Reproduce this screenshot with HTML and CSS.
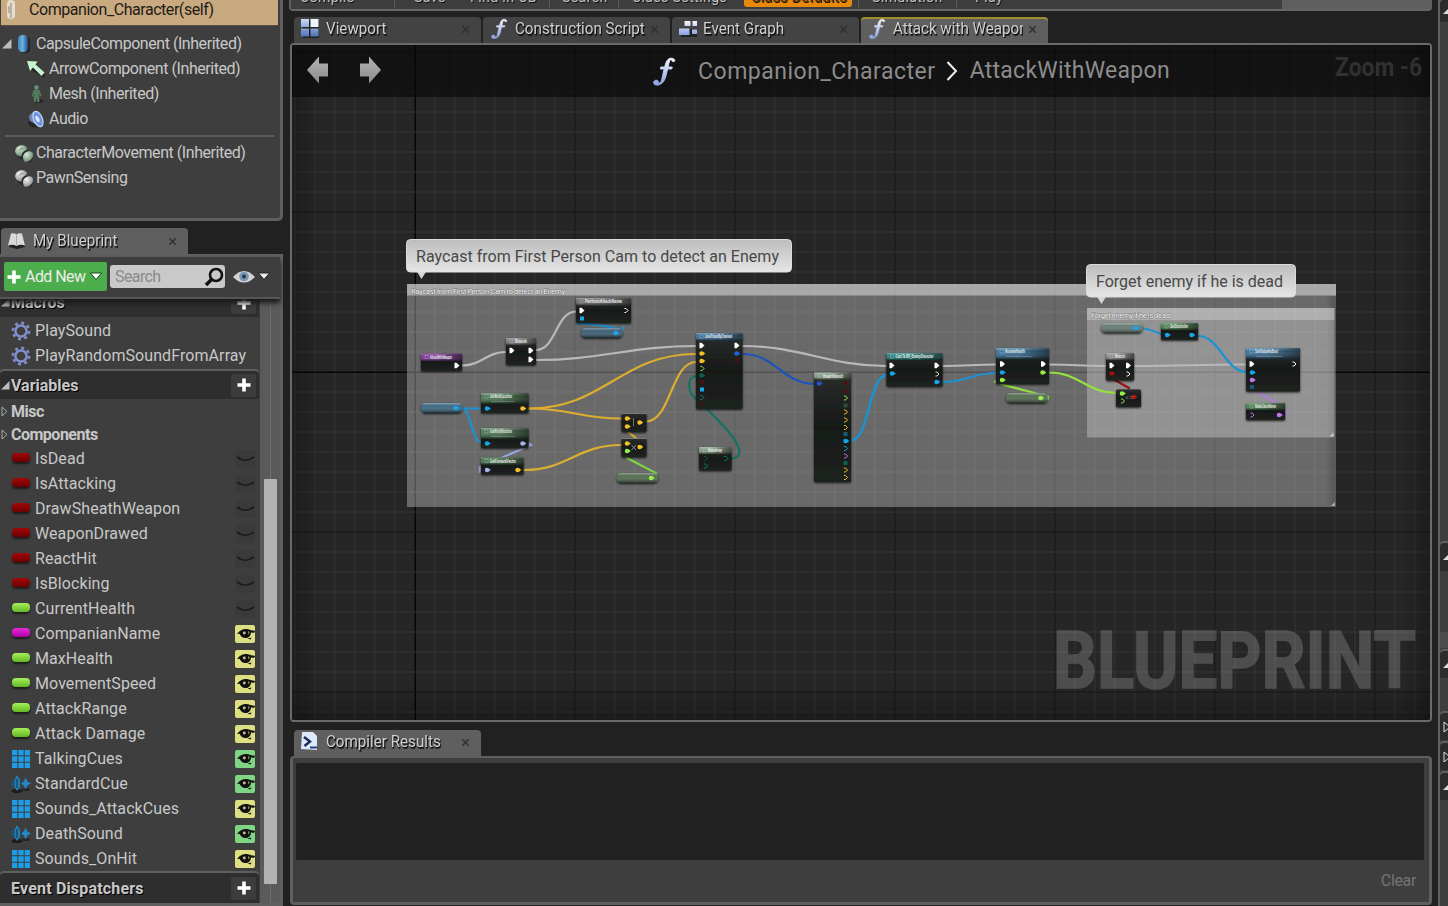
FILE: index.html
```html
<!DOCTYPE html>
<html lang="en">
<head>
<meta charset="utf-8">
<title>Companion_Character</title>
<link rel="stylesheet" href="styles.css">
</head>
<body>
<svg class="defs" width="0" height="0">
  <defs>
    <linearGradient id="ice" x1="0" y1="0" x2="0" y2="1"><stop offset="0" stop-color="#f4f8ff"/><stop offset="1" stop-color="#8a9fe0"/></linearGradient>
    <linearGradient id="iceB" x1="0" y1="0" x2="0" y2="1"><stop offset="0" stop-color="#c8dcf4"/><stop offset="1" stop-color="#4d72b8"/></linearGradient>
    <radialGradient id="ballG" cx=".35" cy=".3" r=".8"><stop offset="0" stop-color="#d6ead9"/><stop offset="1" stop-color="#5e7d63"/></radialGradient>
    <radialGradient id="ballW" cx=".35" cy=".3" r=".8"><stop offset="0" stop-color="#f4f4f4"/><stop offset="1" stop-color="#7d7d7d"/></radialGradient>
    <linearGradient id="caps" x1="0" x2="1"><stop offset="0" stop-color="#3d86c0"/><stop offset=".45" stop-color="#6cb2e2"/><stop offset="1" stop-color="#1d4f7d"/></linearGradient>
    <linearGradient id="grey" x1="0" y1="0" x2="0" y2="1"><stop offset="0" stop-color="#b4b4b4"/><stop offset="1" stop-color="#8a8a8a"/></linearGradient>
    <symbol id="fn" viewBox="0 0 18 22"><path d="M17 2.600C15.600.900 12.900.900 11.300 3.200 10.300 4.700 9.900 6.500 9.500 8H6.600L6.300 9.500H9.100L7.300 17.200C6.900 19.100 6.300 20.100 5.300 20 4.600 19.900 5.200 18.200 3.600 17.900 2.200 17.700 1 18.700 1.200 20 1.500 21.700 4 22 6 21.100 8.900 19.800 9.800 17.300 10.500 14.600L11.700 9.500H14.800L15.200 8H12.100C12.500 6 12.900 3.500 13.800 2.500 14.500 1.900 14.700 3.900 15.900 4 17 4 17.400 3.300 17 2.600Z" fill="url(#ice)" stroke="url(#ice)" stroke-width=".7"/></symbol>
    <symbol id="balls" viewBox="0 0 20 20"><path d="M3 13Q8 19 17 19.500L19 15 12 7Z" fill="#222" opacity=".7"/><path d="M1 8.500A6.800 6.800 0 0 1 13 4.500Q13.500 6.500 10.500 8T7.500 13.500A6.800 6.800 0 0 1 1 8.500Z" fill="var(--ball)"/><path d="M9 15A6 6 0 0 1 18.500 9.500Q20 13 17.500 16T11.500 19Q9 18 9 15Z" fill="var(--ball)"/><path d="M5 7.500Q7 5 9 5.500" stroke="#555" fill="none" opacity=".7"/></symbol>
    <symbol id="gear" viewBox="0 0 20 20"><circle cx="10" cy="10" r="5.600" fill="none" stroke="#8190cd" stroke-width="2.500"/><circle cx="10" cy="10" r="8.100" fill="none" stroke="#8190cd" stroke-width="2.600" stroke-dasharray="2.900 3.462"/></symbol>
    <symbol id="eye" viewBox="0 0 20 18"><path d="M2 9C5 4.800 9 3.300 13 4.200 15.800 4.700 17.500 6 20 5.700L19.500 7.600C18 8 17.200 7.800 16 7.200 16 10.500 14 12.800 11 13 7.500 13.200 5.500 11 4.500 8.700Z" fill="#111"/><circle cx="9.300" cy="8" r="1.400" fill="#c9c98a"/><path d="M13.300 9.500Q14.500 8.500 14.600 7L13 6Z" fill="#c9c98a" opacity=".7"/><path d="M12.500 13.600L16.500 12.600 15.500 14.400Z" fill="#111"/></symbol>
    <symbol id="lid" viewBox="0 0 20 18"><path d="M2 7Q10 13.500 19 7" fill="none" stroke="#1b1b1b" stroke-width="1.700"/></symbol>
    <symbol id="grid9" viewBox="0 0 18 18"><path d="M0 0h5.300v5.300H0zM6.350 0h5.300v5.300h-5.300zM12.700 0H18v5.300h-5.300zM0 6.350h5.300v5.300H0zM6.350 6.350h5.300v5.300h-5.300zM12.700 6.350H18v5.300h-5.300zM0 12.700h5.300V18H0zM6.350 12.700h5.300V18h-5.300zM12.700 12.700H18V18h-5.300z" fill="#1c9de6"/></symbol>
    <symbol id="cue" viewBox="0 0 20 20"><ellipse cx="6" cy="17" rx="5.500" ry="2" fill="#1c1c1c"/><ellipse cx="15" cy="15.500" rx="4" ry="1.500" fill="#252525"/><path d="M6 1L9 5.500 9 13 6 17 3.500 13 3.500 5.500Z" fill="#1f7eb4"/><path d="M2.500 5V14L.500 12V7Z" fill="#195a80"/><path d="M6 5V14" stroke="#123e59" stroke-width="1.200"/><path d="M14.500 3.500L16.500 7.500 20 9.500 16.500 11.500 14.500 15.500 12.800 11.500 10 9.500 12.800 7.500Z" fill="#2486c4"/></symbol>
    <symbol id="plus" viewBox="0 0 14 14"><path d="M7 0.500V13.500M.500 7H13.500" stroke="#fff" stroke-width="3.600"/></symbol>
  </defs>
</svg>

<div class="app">
  <aside class="side">
    <section class="components">
      <div class="self"><svg width="10" height="20" viewBox="0 0 10 20"><rect x="1" y="0" width="8" height="19" rx="4" fill="#e3dccf"/><path d="M5 3v15M3 6v7" stroke="#8d857a" stroke-width="1"/></svg><span>Companion_Character(self)</span></div>
      <div class="crow r1"><svg class="tri" width="10" height="10"><path d="M0 9.500H9.500V0Z" fill="#bdbdbd"/></svg><svg width="12" height="18"><rect x="2" y="2" width="10" height="16" rx="4" fill="#262626"/><rect width="10" height="17" rx="4.500" fill="url(#caps)"/></svg><span>CapsuleComponent (Inherited)</span></div>
      <div class="crow r2"><svg width="19" height="18"><path d="M3 9L17 18 18 15 8 4Z" fill="#222"/><path d="M0 1L10.500 1.500 8.500 4.500 17.500 12.500 14.500 16 6 7.500 3 11Z" fill="#c8f3d0"/></svg><span>ArrowComponent (Inherited)</span></div>
      <div class="crow r2"><svg width="19" height="18"><ellipse cx="11" cy="16" rx="6" ry="1.800" fill="#242424"/><circle cx="9.500" cy="2.500" r="2.200" fill="#6e9277"/><path d="M6.500 5H12.500L14.500 11 13 11.500 12 8 12.500 17H10L9.500 12 9 17H6.500L7 8 6 11.500 4.500 11Z" fill="#537a5c"/></svg><span>Mesh (Inherited)</span></div>
      <div class="crow r2"><svg width="19" height="18"><ellipse cx="9" cy="13" rx="8" ry="4.500" fill="#262626"/><path d="M2 6L7 1 14 14 8 14 3 11Z" fill="#7089ba"/><ellipse cx="11" cy="9" rx="4.300" ry="8" transform="rotate(-24 11 9)" fill="#6d94dd" stroke="#bfd1f6" stroke-width="1.300"/><ellipse cx="10.500" cy="9" rx="1.700" ry="3.500" transform="rotate(-24 10.500 9)" fill="#dce7ff"/></svg><span>Audio</span></div>
      <hr>
      <div class="crow r3 green"><svg width="20" height="20"><use href="#balls"/></svg><span>CharacterMovement (Inherited)</span></div>
      <div class="crow r3 white"><svg width="20" height="20"><use href="#balls"/></svg><span>PawnSensing</span></div>
    </section>

    <div class="tab active bptab"><svg width="18" height="18"><path d="M1 15L4 2 9 4 14 2 17 15 9 17Z" fill="#222"/><path d="M0 13.500L3 1.500Q6 .500 8.500 2.500 11 .500 14 1.500L17 13.500Q12 12 8.500 14 5 12 0 13.500Z" fill="#d9d9d9"/><path d="M8.500 3V13" stroke="#aaa" fill="none"/></svg><span class="t">My Blueprint</span><i>×</i></div>
    <section class="blueprint">
      <div class="bar">
        <div class="add"><svg width="14" height="14"><use href="#plus"/></svg><span>Add New</span><svg width="12" height="9"><path d="M.500 1H11.500L6 7.500Z" fill="#fff" stroke="#1d4a1d"/></svg></div>
        <div class="search"><span>Search</span><svg width="20" height="20"><circle cx="12" cy="8" r="6" fill="none" stroke="#111" stroke-width="2.600"/><path d="M7.500 12.500L2 18" stroke="#111" stroke-width="3.600"/></svg></div>
        <svg class="view" width="22" height="14"><path d="M0 7Q11-5 22 7 11 18 0 7Z" fill="#d4d4d4"/><circle cx="11" cy="6.500" r="4.800" fill="#7896b6"/><circle cx="11" cy="6.500" r="2" fill="#26374c"/></svg>
        <svg class="vcar" width="12" height="9"><path d="M.500 1H11.500L6 7.500Z" fill="#eee" stroke="#222"/></svg>
      </div>
      <div class="listwrap">
        <div class="list">
          <div class="head macros"><svg class="ht" width="9" height="9"><path d="M0 8.500H8.500V0Z" fill="#bbb"/></svg><b>Macros</b><em><svg width="14" height="14"><use href="#plus"/></svg></em></div>
          <div class="row"><svg width="20" height="20"><use href="#gear"/></svg><span>PlaySound</span></div>
          <div class="row"><svg width="20" height="20"><use href="#gear"/></svg><span>PlayRandomSoundFromArray</span></div>
          <div class="head vars"><svg class="ht" width="9" height="9"><path d="M0 8.500H8.500V0Z" fill="#bbb"/></svg><b>Variables</b><em><svg width="14" height="14"><use href="#plus"/></svg></em></div>
          <div class="cat"><svg width="7" height="11"><path d="M1 1L6 5.500 1 10Z" fill="none" stroke="#aaa"/></svg><b>Misc</b></div>
          <div class="cat"><svg width="7" height="11"><path d="M1 1L6 5.500 1 10Z" fill="none" stroke="#aaa"/></svg><b>Components</b></div>
          <div id="variables"></div>
          <div class="head events"><b>Event Dispatchers</b><em><svg width="14" height="14"><use href="#plus"/></svg></em></div>
        </div>
        <div class="scroll"><div class="thumb"></div></div>
      </div>
    </section>
  </aside>

  <main class="main">
    <div class="toolbar">
      <div class="tools"><span class="k1">Compile</span><span class="k2">Save</span><span class="k3">Find in CB</span><span class="k4">Search</span><span class="k5">Class Settings</span><span class="k6">Class Defaults</span><span class="k7">Simulation</span><span class="k8">Play</span></div>
    </div>
    <div class="tabs">
      <div class="tab"><svg width="18" height="19"><path d="M2 2H18V19H2Z" fill="#222"/><path d="M0 0H8V8H0ZM0 9.500H8V17.500H0ZM9.500 9.500H17.500V17.500H9.500Z" fill="url(#iceB)"/><path d="M9.500 0H17.500V8H9.500Z" fill="#eef5fc"/></svg><span class="t">Viewport</span><i>×</i></div>
      <div class="tab"><svg width="17" height="21"><use href="#fn"/></svg><span class="t">Construction Script</span><i>×</i></div>
      <div class="tab"><svg width="21" height="18"><path d="M2 9H21V17H2Z" fill="#222"/><path d="M5.500 1H11.500V6H5.500ZM13.500 1H19.500V6H13.500ZM0 8.500H10.500V15H0ZM13 9.500H19V14H13Z" fill="url(#ice)"/></svg><span class="t">Event Graph</span><i>×</i></div>
      <div class="tab active hot"><svg width="17" height="21"><use href="#fn"/></svg><span class="t cut">Attack with Weapon</span><i>×</i></div>
    </div>
    <section class="graph">
      <svg id="canvas" width="1138" height="676" viewBox="292 45 1138 676"></svg>
      <div class="crumbs">
        <svg width="76" height="30"><path d="M0 14L12 .500V7.500H21V20.500H12V27.500ZM74 14L62 .500V7.500H53V20.500H62V27.500Z" fill="url(#grey)"/></svg>
        <svg class="bigf" width="24" height="30"><use href="#fn"/></svg>
        <span class="c1">Companion_Character</span>
        <svg width="12" height="20"><path d="M1.500 1L10 10 1.500 19" fill="none" stroke="#f0f0f0" stroke-width="2"/></svg>
        <span class="c2">AttackWithWeapon</span>
      </div>
    </section>
    <div class="tabs low">
      <div class="tab active"><svg width="17" height="19"><path d="M1 0H12L16 4V18L0 17Z" fill="#dce8fb"/><path d="M3 5L9 9.500 3.500 14" fill="none" stroke="#1c2b55" stroke-width="2.400"/><path d="M9 15.500H16" stroke="#27407c" stroke-width="2"/></svg><span class="t">Compiler Results</span><i>×</i></div>
    </div>
    <section class="compiler">
      <div class="log"></div>
      <div class="clear"><span>Clear</span></div>
    </section>
  </main>

  <aside class="details">
    <div class="dh d1"><svg width="5" height="6"><path d="M0 6L5 1V6Z" fill="#ddd"/></svg></div>
    <div class="dh d2"><svg width="5" height="6"><path d="M0 6L5 1V6Z" fill="#ddd"/></svg></div>
    <div class="dg"></div>
    <div class="dh d3"><svg width="5" height="6"><path d="M0 6L5 1V6Z" fill="#ddd"/></svg></div>
    <div class="dh d4"><svg width="5" height="12"><path d="M1 1V11L7 6Z" fill="none" stroke="#ddd"/></svg></div>
    <div class="dh d5"><svg width="5" height="12"><path d="M1 1V11L7 6Z" fill="none" stroke="#ddd"/></svg></div>
    <div class="dh d6"><svg width="5" height="6"><path d="M0 6L5 1V6Z" fill="#ddd"/></svg></div>
  </aside>
</div>
<script src="app.js"></script>
</body>
</html>
```
FILE: styles.css
```css
* { box-sizing: border-box; }
body { margin: 0; background: #212121; font-family: Roboto, "Liberation Sans", sans-serif; font-size: 16px; color: #c8c8c8; overflow: hidden; }
svg { flex: none; display: block; }
.defs { position: absolute; }
.app { display: flex; height: 906px; width: 1448px; overflow: hidden; }

.side { width: 283px; display: flex; flex-direction: column; flex: none; }
.components { height: 221px; width: 283px; background: #3e3e3e; border: solid #5f5f5f; border-width: 0 3px 3px 0; border-radius: 0 0 5px 0; letter-spacing: -.45px; flex: none; }
.self { height: 26px; width: 277px; margin-left: 1px; background: #c9a97f; border-bottom: 1px solid #5c5040; color: #1e1b17; display: flex; align-items: flex-start; padding-left: 5px; }
.self span { margin-left: 13px; line-height: 20px; }
.crow { height: 25px; display: flex; align-items: center; }
.r1 { margin-top: 5px; padding-left: 2px; }
.r1 svg { margin-right: 6px; }
.r2 { padding-left: 27px; }
.r2 svg { margin-right: 3px; }
.r3 { padding-left: 14px; }
.r3 svg { margin-right: 2px; }
.green { --ball: url(#ballG); }
.white { --ball: url(#ballW); }
.components hr { border: 0; height: 2px; background: #5d5d5d; margin: 4px 6px 3px 5px; }

.tab { display: flex; align-items: center; width: 187px; height: 26px; background: #434343; border-radius: 4px 4px 0 0; padding: 0 0 1px 7px; position: relative; }
.tab .t { transform: scaleX(.948); transform-origin: 0 50%; margin-left: 7px; white-space: nowrap; color: #d0d0d0; text-shadow: 1px 1px 0 #111, 1px 2px 1px #1a1a1a; }
.tab svg { width: 18px; }
.tab i { position: absolute; right: 11px; top: 2px; font-style: normal; font-size: 17px; line-height: 22px; color: #303030; }
.tab.active { background: #5f5f5f; }
.bptab { margin: 7px 0 0 1px; flex: none; }
.blueprint { flex: 1; background: #3e3e3e; border: solid #5f5f5f; border-width: 3px 3px 3px 0; display: flex; flex-direction: column; min-height: 0; }
.bar { height: 42px; width: 280px; display: flex; align-items: center; flex: none; border-bottom: 2px solid #555; box-shadow: 0 4px 5px #1a1a1a; position: relative; padding: 0 0 1px 4px; }
.add { width: 103px; height: 29px; background: #4bad4b; border-radius: 2px; display: flex; align-items: center; color: #eee; padding-left: 3px; }
.add span { letter-spacing: -.55px; margin: 0 4px 0 4px; }
.search { margin-left: 3px; width: 115px; height: 23px; background: #c9c9c9; border-radius: 3px; display: flex; align-items: center; justify-content: space-between; padding: 0 1px 0 5px; color: #8b8b8b; }
.search span { letter-spacing: -.6px; }
.view { margin-left: 8px; }
.vcar { margin-left: 3px; }
.listwrap { flex: 1; display: flex; min-height: 0; overflow: hidden; }
.list { width: 260px; flex: none; }
.head { height: 28px; background: #2e2e2e; border-radius: 4px 4px 0 0; display: flex; align-items: center; padding-left: 1px; width: 259px; text-shadow: 1px 1px 0 #000; }
.head b { flex: 1; margin-left: 1px; }
.head em { width: 25px; height: 23px; background: #3c3c3c; border-radius: 2px; display: flex; align-items: center; justify-content: center; margin-right: 3px; }
.head em svg { height: 14px; }
.macros { height: 29px; margin-top: -11px; margin-bottom: 1px; }
.row { height: 25px; display: flex; align-items: center; padding-left: 11px; letter-spacing: .08px; }
.row svg { margin-right: 4px; }
.row .vis { margin: 0 5px 0 auto; width: 20px; height: 18px; border-radius: 2px; background: #3a3a3a; }
.row .vis.y { background: #dede83; }
.row .vis.g { background: #7fd584; }
.pill { width: 18px; height: 9px; border-radius: 4px; margin: 0 5px 2px 1px; box-shadow: 0 2px 2px #1c1c1c; }
.bool { background: linear-gradient(#a00808, #6e0000); }
.float { background: linear-gradient(#a6f05a, #62b823); }
.name { background: linear-gradient(#e62bd8, #b000a6); }
.row .sq { margin: 0 5px 0 1px; }
.vars { margin-top: 3px; box-shadow: 0 -2px 0 #5f5f5f; margin-bottom: 1px; }
.cat { height: 23px; display: flex; align-items: center; padding-left: 1px; }
.cat b { margin-left: 3px; letter-spacing: -.5px; }
.events { margin-top: 2px; box-shadow: 0 -2px 0 #5f5f5f; padding-left: 10px; height: 30px; letter-spacing: .18px; }
.scroll { width: 20px; background: linear-gradient(90deg, #5a5a5a 0 10px, #6c6c6c 10px 11px, #5a5a5a 11px); padding: 180px 0 0 4px; }
.thumb { width: 13px; height: 405px; background: #b3b3b3; border-radius: 1px; }

.main { margin-left: 6px; width: 1143px; display: flex; flex-direction: column; flex: none; }
.toolbar { height: 11px; background: #5f5f5f; border-bottom: 2px solid #666; border-radius: 0 0 4px 4px; padding-left: 2px; overflow: hidden; }
.tools { width: 991px; height: 9px; background: #3e3e3e; display: flex; overflow: hidden; }
.tools span { margin-top: -11px; height: 19px; line-height: 16px; font-size: 14px; letter-spacing: .42px; white-space: nowrap; color: #c0c0c0; border-right: 1px solid #5a5a5a; text-shadow: 1px 1px 0 #111; flex: none; }
.tools .k1 { width: 104px; padding-left: 9px; }
.tools .k2 { width: 65px; padding-left: 19px; border-right: 0; }
.tools .k3 { width: 90px; padding-left: 10px; }
.tools .k4 { width: 69px; padding-left: 12px; }
.tools .k5 { width: 125px; padding-left: 13px; border-right: 0; }
.tools .k6 { width: 108px; padding-left: 7px; border-right: 0; background: #e8890c; color: #50340a; border-radius: 3px; height: 18px; }
.tools .k7 { width: 99px; margin-left: 6px; padding-left: 13px; border-left: 1px solid #5a5a5a; }
.tools .k8 { width: 60px; padding-left: 18px; border-right: 0; }
.tabs { display: flex; gap: 2px; height: 32px; padding: 6px 0 0 5px; }
.tabs.low { height: 34px; padding-top: 8px; flex: none; }
.tabs .tab { height: 27px; padding-bottom: 4px; }
.tabs .tab i { top: 1px; }
.tab.hot { box-shadow: inset 0 2px 0 #a08d2c; }
.tab .cut { width: 137px; overflow: hidden; margin-left: 7px; }
.tabs .tab:nth-child(2) .t { margin-left: 7px; }
.tabs .tab:nth-child(3) .t { margin-left: 6px; }
.graph { height: 679px; margin-left: 1px; width: 1142px; border: 2px solid #6a6a6a; border-radius: 4px; position: relative; flex: none; overflow: hidden; }
.crumbs { position: absolute; inset: 0 0 auto 0; height: 52px; background: rgba(8, 8, 8, .66); display: flex; align-items: center; padding-left: 15px; font-size: 23px; color: #8c8c8c; }
.bigf { margin: 0 22px 0 269px; }
.c1 { letter-spacing: .52px; margin-right: 10px; }
.c2 { letter-spacing: .28px; margin: -1px 0 0 12px; }
.compiler { flex: 1; margin: 0 0 1px 1px; width: 1142px; border: 3px solid #5f5f5f; border-top-width: 2px; border-radius: 4px; background: #3e3e3e; padding: 5px 5px 0 3px; }
.log { background: #212121; height: 97px; border-radius: 2px; }
.clear { display: flex; justify-content: flex-end; padding: 11px 8px 0 0; color: #757575; letter-spacing: -.35px; }

.details { margin-left: 6px; width: 10px; flex: none; background: #3e3e3e; border-left: 2px solid #5f5f5f; }
.dh { background: #2c2c2c; border-radius: 4px 0 0 0; display: flex; align-items: center; justify-content: flex-end; box-shadow: 0 -2px 0 #5f5f5f; }
.d1 { height: 22px; }
.d2 { height: 28px; margin-top: 521px; }
.dg { height: 16px; margin-top: 61px; background: #4b4b4b; }
.d3 { height: 27px; margin-top: 3px; }
.d4 { height: 27px; margin-top: 35px; }
.d5 { height: 27px; margin-top: 3px; }
.d6 { height: 27px; margin-top: 3px; }
```
FILE: app.js
```js
const eye = kind => `<svg class="vis ${kind}" viewBox="0 0 20 18"><use href="#${kind ? 'eye' : 'lid'}"/></svg>`;
const pill = kind => `<div class="pill ${kind}"></div>`;
const sheet = '<svg class="sq" width="18" height="18"><use href="#grid9"/></svg>';
const cue = '<svg width="20" height="20"><use href="#cue"/></svg>';

document.getElementById('variables').innerHTML = [
  ['IsDead', pill('bool'), ''], ['IsAttacking', pill('bool'), ''], ['DrawSheathWeapon', pill('bool'), ''],
  ['WeaponDrawed', pill('bool'), ''], ['ReactHit', pill('bool'), ''], ['IsBlocking', pill('bool'), ''],
  ['CurrentHealth', pill('float'), ''], ['CompanianName', pill('name'), 'y'], ['MaxHealth', pill('float'), 'y'],
  ['MovementSpeed', pill('float'), 'y'], ['AttackRange', pill('float'), 'y'], ['Attack Damage', pill('float'), 'y'],
  ['TalkingCues', sheet, 'g'], ['StandardCue', cue, 'g'], ['Sounds_AttackCues', sheet, 'y'],
  ['DeathSound', cue, 'g'], ['Sounds_OnHit', sheet, 'y']
].map(([name, icon, vis]) => `<div class="row">${icon}<span>${name}</span>${eye(vis)}</div>`).join('');

const W = '#fff', B = '#18a5ea', Y = '#f2c028', G = '#98f04a', L = '#a9b4f2', T = '#128068', P = '#c07af0', D = '#1c63d8';
let out = '';
const add = s => { out += s; };

add(`<defs>
<linearGradient id="body" x1="0" y1="0" x2="0" y2="1"><stop offset="0" stop-color="#2a2d2b"/><stop offset=".5" stop-color="#171918"/><stop offset="1" stop-color="#1f2220"/></linearGradient>
<linearGradient id="bub" x1="0" y1="0" x2="0" y2="1"><stop offset="0" stop-color="#bcbcbc"/><stop offset="1" stop-color="#e6e6e6"/></linearGradient>
<linearGradient id="sheen" x1="0" y1="0" x2="0" y2="1"><stop offset="0" stop-color="#fff" stop-opacity=".4"/><stop offset=".3" stop-color="#fff" stop-opacity=".05"/><stop offset="1" stop-color="#000" stop-opacity=".55"/></linearGradient>
<linearGradient id="fade" x1="0" x2="1"><stop offset="0" stop-color="#111" stop-opacity="0"/><stop offset="1" stop-color="#111" stop-opacity=".6"/></linearGradient>
<linearGradient id="edgeL" x1="0" x2="1"><stop offset="0" stop-opacity=".25"/><stop offset="1" stop-opacity="0"/></linearGradient>
<linearGradient id="edgeB" x1="0" y1="1" x2="0" y2="0"><stop offset="0" stop-opacity=".3"/><stop offset="1" stop-opacity="0"/></linearGradient>
<filter id="sh" x="-20%" y="-20%" width="140%" height="150%"><feDropShadow dx="0" dy="1" stdDeviation="1.300" flood-opacity=".8"/></filter></defs>
<rect x="292" y="45" width="1138" height="676" fill="#262626"/>`);

for (let x = 295; x < 1430; x += 20) {
  const major = (x - 415) % 160 === 0;
  add(`<rect x="${x - .5}" y="45" width="${x === 415 ? 1.5 : 1}" height="676" fill="${x === 415 ? '#050505' : major ? '#161616' : '#353535'}"/>`);
}
for (let y = 52; y < 721; y += 20) {
  const major = (y - 372) % 160 === 0;
  add(`<rect x="292" y="${y - .5}" width="1138" height="${y === 372 ? 1.5 : 1}" fill="${y === 372 ? '#050505' : major ? '#161616' : '#353535'}"/>`);
}
add(`<rect x="292" y="45" width="30" height="676" fill="url(#edgeL)"/>
<rect x="292" y="686" width="1138" height="35" fill="url(#edgeB)"/>
<rect x="-1430" y="-721" width="30" height="676" fill="url(#edgeL)" transform="rotate(180)"/>
<text x="1053" y="688" font-size="79.500" font-weight="bold" fill="#fff" stroke="#fff" stroke-width="1.600" opacity=".18" textLength="363" lengthAdjust="spacingAndGlyphs">BLUEPRINT</text>`);

const comment = (x, y, w, h, band, alpha, bandAlpha, text, tw) => add(`<rect x="${x}" y="${y}" width="${w}" height="${h}" fill="#fff" fill-opacity="${alpha}"/>
<rect x="${x}" y="${y}" width="${w}" height="${band}" fill="#ddd" fill-opacity="${bandAlpha}"/>
<text x="${x + 4}" y="${y + 9.500}" font-size="8" fill="#f2f2f2" stroke="#333" stroke-width="1" stroke-opacity=".45" paint-order="stroke" textLength="${tw}">${text}</text>
<path d="M${x + w - 1} ${y + h - 5}V${y + h - 1}H${x + w - 5}Z" fill="#ccc"/>`);
comment(407, 284, 929, 223, 11.500, .31, .55, 'Raycast from First Person Cam to detect an Enemy', 154);
add('<rect x="1326" y="296" width="10" height="211" fill="url(#fade)" opacity=".4"/>');
comment(1087, 308, 247.500, 129.500, 12, .28, .4, 'Forget enemy if he is dead', 79);

const bubble = (x, y, w, h, text, tw) => add(`<path d="M${x + 10} ${y + h - 1}h10l-5 8z" fill="#d6d6d6"/>
<rect x="${x}" y="${y}" width="${w}" height="${h}" rx="4" fill="url(#bub)" stroke="#dcdcdc"/>
<text x="${x + 9.500}" y="${y + 22.500}" font-size="16" fill="#484848" textLength="${tw}">${text}</text>`);
bubble(406.500, 239.500, 385, 32.500, 'Raycast from First Person Cam to detect an Enemy', 363);
bubble(1086.500, 264.500, 209, 32.500, 'Forget enemy if he is dead', 187);

const wire = (c, d, w = 2.200) => add(`<path d="${d}" fill="none" stroke="${c}" stroke-width="${w}" stroke-linecap="round"/>`);
const link = (c, x1, y1, x2, y2, k = .45, w) => {
  const dx = (x2 - x1) * k;
  wire(c, `M${x1} ${y1}C${x1 + dx} ${y1} ${x2 - dx} ${y2} ${x2} ${y2}`, w);
};
const WH = '#b9b9b9';
link(WH, 462, 365.500, 506, 352);
link(WH, 536, 350, 576, 311.500, .5);
link(WH, 536, 360, 696, 346, .4);
link(WH, 743, 346, 886, 366, .4);
link(WH, 943, 366, 996, 364.500);
link(WH, 1049, 364.500, 1106, 366);
link(WH, 1134, 366, 1246, 364.500);
wire('#1b93d2', 'M576 323Q590 324 604 326T622 331L624 326', 1.800);
link('#1b93d2', 462, 408.500, 481, 408.500);
link('#1b93d2', 462, 409, 481, 442, .5);
link('#dcae30', 529, 408.500, 696, 354);
link('#dcae30', 529, 408.500, 621, 418.500);
link('#dcae30', 646, 421.500, 696, 362, .5);
link('#dcae30', 524, 470, 621, 445);
wire('#dcae30', 'M627 431L637 439', 2);
wire('#9aa3dd', 'M529 443.500L531 445 501 458M480 467V472');
wire('#7ed83c', 'M627 458L656 473V476', 2);
link('#1d55b8', 743, 354, 815, 384);
wire('#127363', 'M696 376C687 377 687 391 696 399M708 410C722 424 738 440 739.500 451 739.500 456 736 458.500 731 458.500');
link('#1b93d2', 851, 440.500, 887, 375, .5, 2.500);
link('#1b93d2', 943, 382, 996, 373);
link('#94e03e', 1049, 372.500, 1117, 393);
wire('#94e03e', 'M995 381.500L1004 385 1048 396.500V399', 2.200);
wire('#9c1414', 'M1113 379L1129 388');
wire('#1b93d2', 'M1141 328Q1146 328 1161 334');
link('#1b93d2', 1198, 336, 1247, 372);
wire('#b47ae0', 'M1256 391L1276 403M1286 410V415', 2);

const exec = (x, y, c = W) => `<path d="M${x - 2} ${y - 2.700}H${x}L${x + 3} ${y} ${x} ${y + 2.700}H${x - 2}Z" fill="${c}"/>`;
const ring = (x, y, c = W) => `<path d="M${x - 1.500} ${y - 2}H${x}L${x + 2} ${y} ${x} ${y + 2}H${x - 1.500}" fill="none" stroke="${c}" stroke-width="1"/>`;
const dot = (x, y, c) => `<circle cx="${x}" cy="${y}" r="2.200" fill="${c}"/><path d="M${x + 1.500} ${y - 1.800}l2.300 1.800-2.300 1.800z" fill="${c}"/>`;
const box = (x, y, c) => `<rect x="${x - 2}" y="${y - 2}" width="4" height="4" fill="${c}"/>`;
const draw = { e: exec, r: ring, d: dot, s: box };

function node(x, y, w, h, hh, hc, title, pins, tw) {
  add(`<g filter="url(#sh)"><rect x="${x}" y="${y}" width="${w}" height="${h}" rx="1.500" fill="url(#body)"/></g>`);
  if (hh) {
    add(`<rect x="${x}" y="${y}" width="${w}" height="${hh}" rx="1.500" fill="${hc}"/><rect x="${x}" y="${y}" width="${w}" height="${hh}" fill="url(#sheen)"/><rect x="${x + w * .4}" y="${y}" width="${w * .6}" height="${hh}" fill="url(#fade)"/>
<rect x="${x + 4}" y="${y + 2}" width="3" height="3" fill="${hc}" stroke="#ccc" stroke-width=".5" opacity=".8"/>
<text x="${x + 9}" y="${y + 5.300}" font-size="4.500" fill="#e6e6e6" font-weight="bold" textLength="${tw || Math.min(w - 14, 32)}" lengthAdjust="spacingAndGlyphs">${title}</text>`);
    if (hh > 9) add(`<rect x="${x + 10}" y="${y + 8}" width="${w * .5}" height="1" fill="#bbb" opacity=".35"/>`);
  }
  for (const [k, px, py, c] of pins) add(draw[k](px, py, c));
}
node(421, 353.500, 41, 17.500, 7.500, '#7a2c92', 'AttackWithWeapon', [['e', 456.500, 365.500]], 22);
node(506, 338, 30, 27, 7, '#777', 'Branch', [['e', 511.500, 350.500], ['e', 530.500, 350.500], ['e', 530.500, 359.500]], 12);
node(576, 298, 55, 25, 7.500, '#666', 'PerformAttackName', [['e', 581.500, 310.500], ['s', 582, 318.500, B], ['r', 626, 310.500]], 37);
node(481, 393, 47.500, 20, 10.500, '#3f7048', 'GetWorldLocation', [['d', 487, 408.500, B], ['d', 522.500, 408.500, Y]], 22);
node(481, 428, 47.500, 20, 10.500, '#3f7048', 'GetWorldRotation', [['d', 487, 443.500, B], ['d', 522.500, 443.500, L]], 22);
node(481, 457.500, 42.500, 17, 7, '#3f7048', 'GetForwardVector', [['d', 487, 470, L], ['d', 517.500, 470, Y]], 26);
node(621.500, 413.500, 25, 18.500, 0, '', '', [['d', 627, 418.500, Y], ['d', 627, 426.500, Y], ['d', 639.500, 422.500, Y]]);
node(621.500, 438.500, 25, 18.500, 0, '', '', [['d', 627, 443.500, Y], ['d', 627, 451, G], ['d', 639.500, 447, Y]]);
add('<path d="M633.500 418V426M621.500 413.500H646M621.500 438.500H646" stroke="#888" stroke-width=".8"/><path d="M631.500 445L636 450M636 445L631.500 450" stroke="#aaa" stroke-width=".8"/>');
node(696, 333, 46.500, 76, 7.500, '#2d6a96', 'LineTraceByChannel', [['e', 701.500, 345.500], ['d', 701.500, 353.500, Y], ['d', 701.500, 361, Y], ['r', 702, 368.500, G], ['d', 701.500, 375.500, '#0f5f4e'], ['s', 702, 382, '#4a1212'], ['s', 702, 389.500, B], ['r', 702, 397.500, T], ['s', 702, 404.500, '#351414'], ['e', 736.500, 345.500], ['d', 736.500, 353.500, D], ['s', 737, 360, '#4a1212']], 27);
node(699, 447, 32.500, 23.500, 7, '#7d9a7d', 'MakeArray', [['r', 705.500, 458.500, '#17503f'], ['r', 705.500, 466, T], ['r', 726, 458.500, T]], 14);
node(814, 372.500, 37, 109.500, 7, '#7d9a7d', 'BreakHitResult', [['d', 819, 383.500, '#2c4fd0'], ['s', 845.500, 383, '#4a1212'], ['s', 845.500, 391, '#4a1212'], ['r', 845.500, 398, G], ['s', 845.500, 405.500, '#354c3c'], ['r', 845.500, 412, Y], ['r', 845.500, 420, Y], ['r', 845.500, 427.500, Y], ['s', 845.500, 434, '#155c74'], ['d', 845.500, 441, B], ['r', 845.500, 448.500, '#20a8c8'], ['r', 845.500, 456, P], ['s', 845.500, 463, '#0f5f4e'], ['r', 845.500, 470, Y], ['r', 845.500, 477.500, Y]], 20);
node(886.500, 353, 56, 33.500, 7, '#1c7d76', 'Cast To BP_EnemyCharacter', [['e', 891.500, 365.500], ['d', 892, 373.500, B], ['e', 936.500, 365.500], ['r', 937, 374, '#e8dcb8'], ['d', 936.500, 382, B]], 38);
node(996, 348, 53, 36, 11, '#2d6a96', 'ReceiveHealth', [['e', 1002, 364], ['d', 1002, 372.500, B], ['d', 1002, 380, G], ['e', 1043, 364], ['d', 1042.500, 372.500, G]], 20);
node(1106, 353, 28, 27.500, 7, '#888', 'Branch', [['e', 1111.500, 365.500], ['d', 1111.500, 373.500, '#a01010'], ['e', 1128, 365.500], ['r', 1128, 374]], 10);
node(1116, 389.500, 25, 17.500, 0, '', '', [['d', 1122, 393.500, G], ['r', 1122.500, 401, G], ['d', 1133.500, 397, '#c01515']]);
add('<text x="1125" y="400" font-size="8" fill="#777">&lt;=</text>');
node(1161, 323, 37, 17, 7, '#3f7a45', 'GetController', [['d', 1167, 335, B], ['d', 1191.500, 335, B]], 18);
node(1246, 348, 54, 43.500, 10.500, '#2d6a96', 'SetValueAsBool', [['e', 1251.500, 364], ['d', 1252, 372.500, B], ['d', 1252, 380, P], ['s', 1252, 387, '#17587a'], ['r', 1294, 364]], 23);
node(1246, 403, 39, 17, 7, '#3f7a45', 'MakeLiteralName', [['r', 1252, 415, P], ['d', 1279, 415, P]], 21);

const capsule = (x, y, w, c, pin) => add(`<g filter="url(#sh)"><rect x="${x}" y="${y}" width="${w}" height="10" rx="4.500" fill="${c}"/></g><rect x="${x}" y="${y}" width="${w}" height="10" rx="4.500" fill="url(#sheen)"/>${dot(x + w - 7, y + 5, pin)}`);
capsule(581, 328, 41.500, '#31546a', B);
capsule(421, 403, 41.500, '#31607a', B);
capsule(616.500, 473, 41.500, '#4c6548', G);
capsule(1006, 393, 41.500, '#4c6548', G);
capsule(1101, 323, 41.500, '#5f7470', B);
add('<text x="1335" y="75.500" font-size="25" font-weight="bold" fill="#fff" fill-opacity=".42" textLength="87" lengthAdjust="spacingAndGlyphs">Zoom -6</text>');
document.getElementById('canvas').innerHTML = out;
```
